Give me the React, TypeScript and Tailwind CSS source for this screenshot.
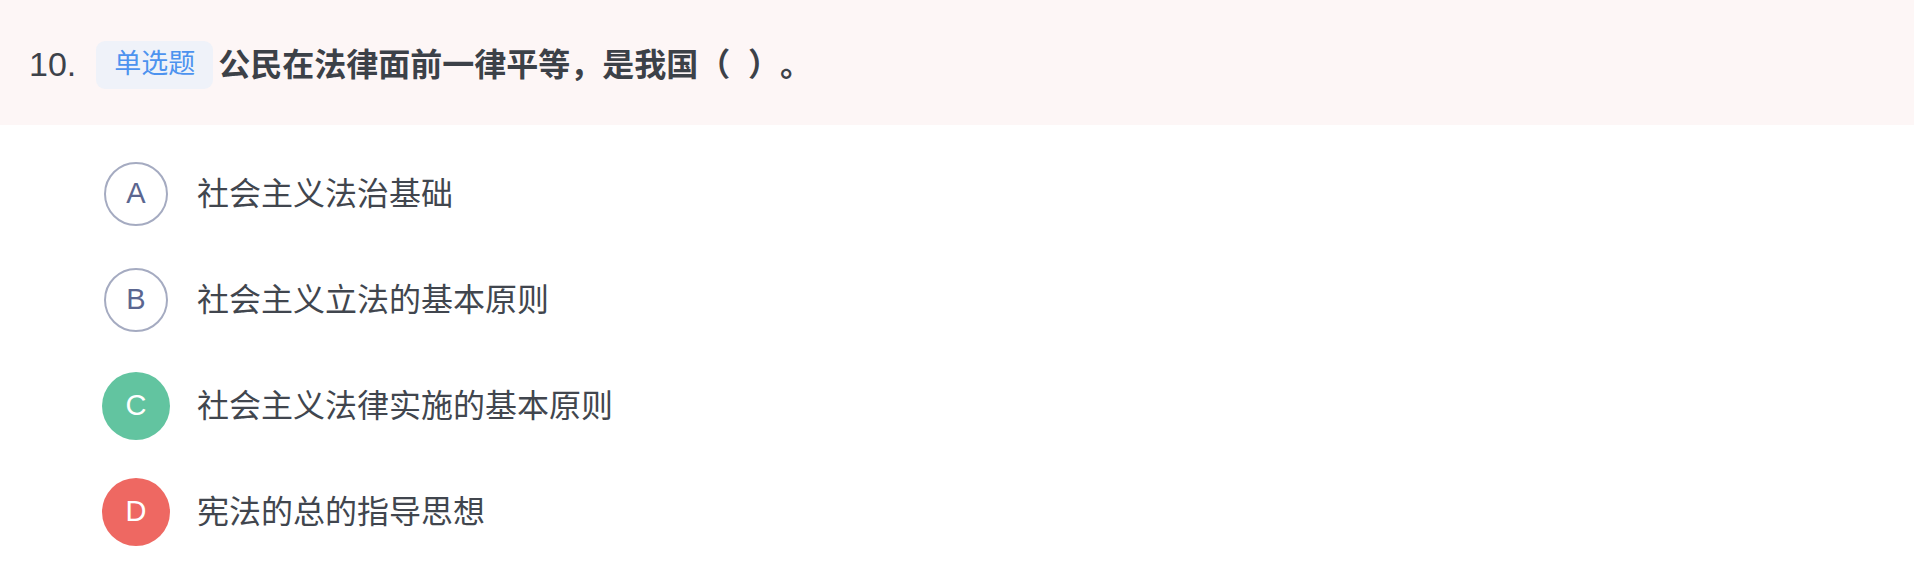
import React from "react";

type Option = {
  key: string;
  text: string;
  state?: "right" | "wrong";
};

const options: Option[] = [
  { key: "A", text: "社会主义法治基础" },
  { key: "B", text: "社会主义立法的基本原则" },
  { key: "C", text: "社会主义法律实施的基本原则", state: "right" },
  { key: "D", text: "宪法的总的指导思想", state: "wrong" },
];

const font = { fontFamily: '"Liberation Sans", "Noto Sans CJK SC", sans-serif' };

const Badge = ({ option }: { option: Option }) => {
  if (option.state === "right") {
    return (
      <div className="w-[68px] h-[68px] rounded-full bg-[#62c4a0] text-white flex items-center justify-center text-[29px]">
        {option.key}
      </div>
    );
  }
  if (option.state === "wrong") {
    return (
      <div className="w-[68px] h-[68px] rounded-full bg-[#ee6862] text-white flex items-center justify-center text-[29px]">
        {option.key}
      </div>
    );
  }
  return (
    <div className="w-[68px] h-[68px] flex items-center justify-center">
      <div className="w-[64px] h-[64px] rounded-full border-2 border-[#a5abc1] text-[#5b6690] flex items-center justify-center text-[29px]">
        {option.key}
      </div>
    </div>
  );
};

export default function App() {
  return (
    <div className="w-full min-h-[588px] bg-white [text-spacing-trim:space-all]" style={font}>
      <div className="h-[125px] bg-[#fdf6f6] flex items-center pl-[29px] pt-1">
        <span className="text-[34px] text-[#3d424a] mr-[20px]">10.</span>
        <span className="h-[48px] px-[18px] rounded-[9px] bg-[#eff2f9] text-[#4d93ef] text-[27px] flex items-center mr-[5px]">
          单选题
        </span>
        <span className="text-[32px] font-bold text-[#3c4148]">
          公民在法律面前一律平等，是我国（&nbsp;&nbsp;）。
        </span>
      </div>
      <div className="pt-4 pl-[102px]">
        {options.map((option) => (
          <div key={option.key} className="h-[106px] flex items-center gap-[27px]">
            <Badge option={option} />
            <span className="text-[32px] text-[#41464e]">{option.text}</span>
          </div>
        ))}
      </div>
    </div>
  );
}
